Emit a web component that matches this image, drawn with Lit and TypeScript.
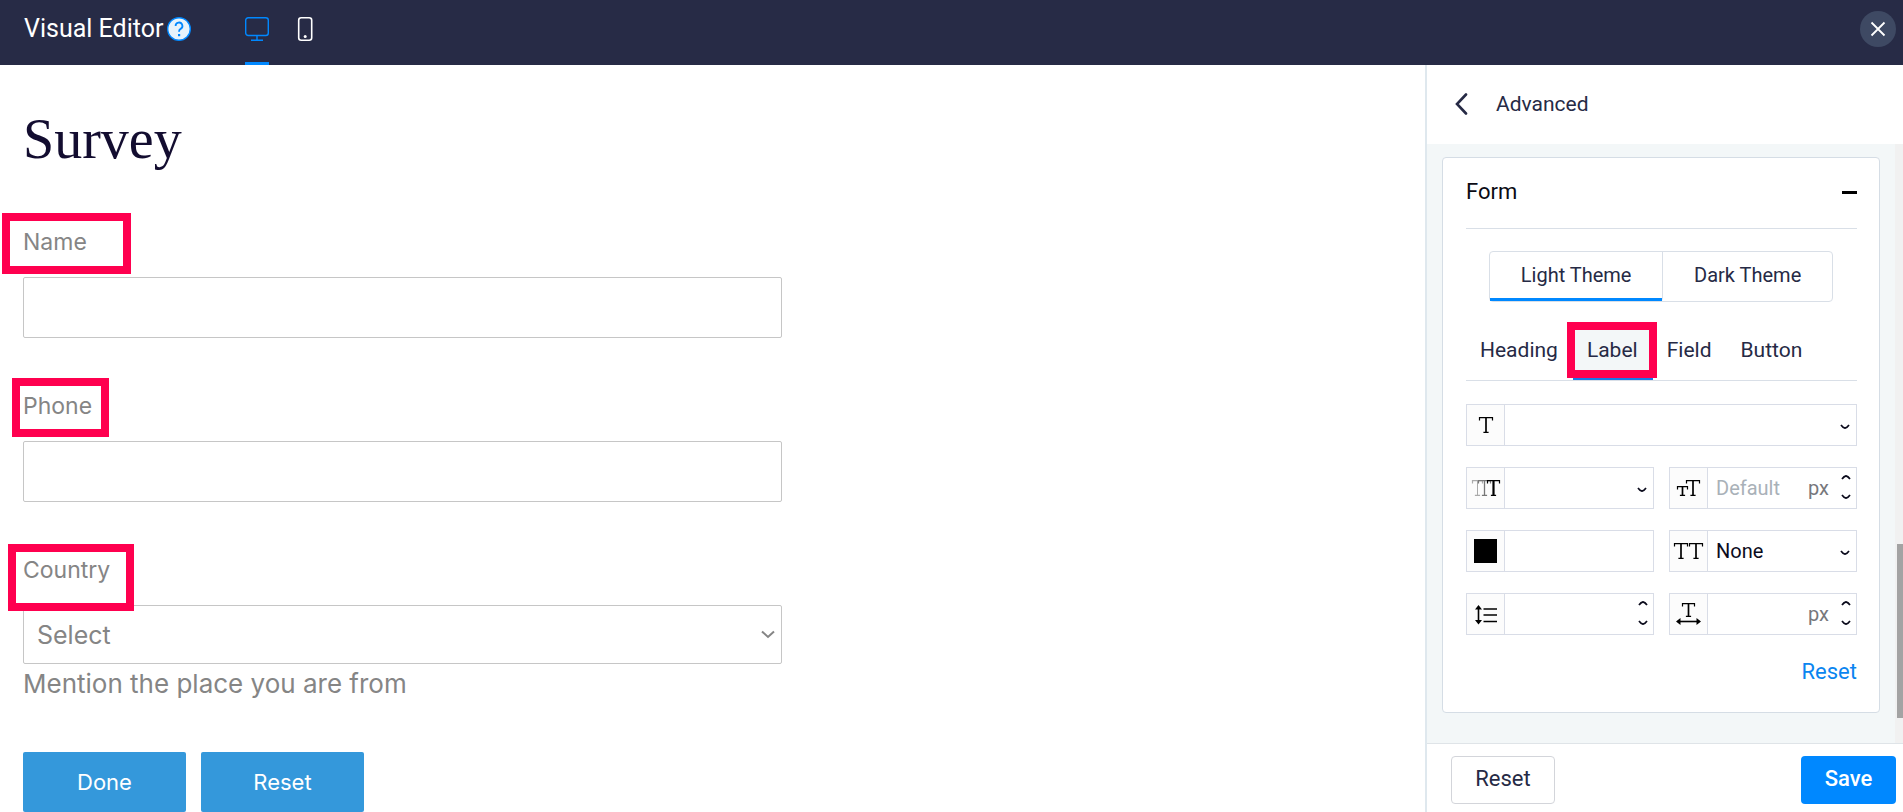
import { LitElement, html, css, svg, nothing } from "lit";
import { customElement, property, state } from "lit/decorators.js";
import { classMap } from "lit/directives/class-map.js";

const chevronDown = html`<svg class="chev" viewBox="0 0 10 6" width="10" height="6" aria-hidden="true">
  <path d="M1 1 Q3 3.8 5 4.2 Q7 3.8 9 1" fill="none" stroke="currentColor" stroke-width="1.7" /></svg>`;
const chevronUp = html`<svg class="chev" viewBox="0 0 10 6" width="10" height="6" aria-hidden="true">
  <path d="M1 5 Q3 2.2 5 1.8 Q7 2.2 9 5" fill="none" stroke="currentColor" stroke-width="1.7" /></svg>`;

/* Slab-serif type mark: bar with drop serifs, stem and foot. */
const typeMark = (x: number, y: number, w: number, h: number, color = "#000", stem = 1.7) => {
  const c = x + w / 2;
  return svg`<path d="M${x + 0.5} ${y + 3.6}V${y + 0.6}H${x + w - 0.5}V${y + 3.6}M${c - 2.6} ${y + h - 0.6}H${c + 2.6}"
      fill="none" stroke=${color} stroke-width="1.2" />
    <path d="M${c} ${y + 0.6}V${y + h - 0.6}" stroke=${color} stroke-width=${stem} />`;
};

const icons: Record<string, unknown> = {
  family: svg`${typeMark(12, 12, 14, 16)}`,
  weight: svg`${typeMark(5, 12, 11, 16, "#aaa", 1)}${typeMark(11, 12, 13, 16, "#777", 1.3)}${typeMark(20, 12, 13, 16, "#000", 2.2)}`,
  size: svg`${typeMark(7, 18, 11, 10)}${typeMark(16, 12, 14, 16)}`,
  transform: svg`${typeMark(4, 12, 14, 16)}${typeMark(19, 12, 14, 16)}`,
  leading: svg`<path d="M11.500 13.500V28M16.500 15H30M16.500 21H30M16.500 27.500H30" stroke="#000" stroke-width="1.6" />
    <path d="M11.500 11L15 15.500H8ZM11.500 30.500L15 26H8Z" />`,
  tracking: svg`${typeMark(12, 9, 13, 14)}
    <path d="M8 27.500H29" stroke="#000" stroke-width="1.6" />
    <path d="M6 27.500L10.500 24V31ZM31 27.500L26.500 24V31Z" />`,
};

@customElement("style-control")
class StyleControl extends LitElement {
  @property() icon = "";
  @property() label = "";
  @property() kind: "select" | "number" | "color" = "select";
  @property() value = "";
  @property() hint = "";
  @property() unit = "";

  static styles = css`
    :host { display: block; }
    .box {
      display: flex; height: 42px; box-sizing: border-box;
      border: 1px solid #d9dde7; background: #fff;
      font: 20px/24px Roboto, sans-serif; color: #0b0b1c;
    }
    .mark {
      flex: 0 0 38px; box-sizing: border-box; border-right: 1px solid #d9dde7;
      background: #fcfcfc; display: flex; align-items: center; justify-content: center;
    }
    .swatch { width: 23px; height: 24px; padding: 0; border: 0; background: none; appearance: none; }
    .swatch::-webkit-color-swatch-wrapper { padding: 0; }
    .swatch::-webkit-color-swatch { border: 0; }
    .entry {
      flex: 1; min-width: 0; width: 0; box-sizing: border-box; padding: 0 8px; margin: 0; border: 0; outline: 0;
      background: transparent; appearance: none; border-radius: 0; font: inherit; color: inherit;
    }
    .entry::placeholder { color: #a9b1b8; opacity: 1; }
    .unit { color: #77777c; align-self: center; padding-right: 11px; }
    .picker { flex: 1; display: grid; align-items: center; }
    .picker .entry { grid-area: 1 / 1; width: 100%; height: 100%; }
    .picker .chev { grid-area: 1 / 1; justify-self: end; margin-right: 6px; margin-top: 4px; pointer-events: none; }
    .steps { display: flex; flex-direction: column; justify-content: space-between; padding: 4px 0; margin-right: 4px; }
    .step { display: flex; align-items: center; justify-content: center; width: 12px; height: 10px; padding: 0; border: 0; background: none; color: inherit; }
    .step:last-child { height: 14px; }
  `;

  private step(by: number) {
    this.value = String((Number(this.value) || 0) + by);
  }

  render() {
    return html`<div class="box">
      <span class="mark">${this.kind === "color"
        ? html`<input class="swatch" type="color" value="#000000" aria-label=${this.label} />`
        : html`<svg viewBox="0 0 37 40" width="37" height="40" aria-hidden="true">${icons[this.icon]}</svg>`}</span>
      ${this.kind === "select"
        ? html`<div class="picker"><select class="entry" aria-label=${this.label}><option>${this.value}</option></select>${chevronDown}</div>`
        : html`<input class="entry" type="text" aria-label=${this.label} .value=${this.value} placeholder=${this.hint || nothing} />`}
      ${this.unit ? html`<span class="unit">${this.unit}</span>` : nothing}
      ${this.kind === "number"
        ? html`<div class="steps">
            <button class="step" aria-label="Increase" @click=${() => this.step(1)}>${chevronUp}</button>
            <button class="step" aria-label="Decrease" @click=${() => this.step(-1)}>${chevronDown}</button>
          </div>`
        : nothing}
    </div>`;
  }
}

@customElement("survey-form")
class SurveyForm extends LitElement {
  static styles = css`
    :host { display: block; font: 23px/30px Inter, sans-serif; color: #858585; padding: 42px 23px 0; }
    .title { font: 400 56px/64px "Liberation Serif", serif; color: #130d30; margin: 0 0 56px; }
    .row { max-width: 759px; margin-bottom: 53px; }
    .name { position: relative; display: block; width: max-content; margin-bottom: 20px; }
    .entry {
      display: block; width: 100%; height: 61px; box-sizing: border-box; margin: 0; padding: 0 13px;
      border: 1px solid #c6c6c6; border-radius: 2px; background: #fff; outline: 0; appearance: none;
      font: 25px/30px Inter, sans-serif; color: #858585;
    }
    .picker { display: grid; align-items: center; }
    .picker .entry { grid-area: 1 / 1; height: 59px; }
    .arrow { grid-area: 1 / 1; justify-self: end; margin-right: 7px; pointer-events: none; }
    .hint { font-size: 26px; line-height: 30px; margin: 5px 0 0; }
    .actions { display: flex; gap: 15px; }
    .action {
      height: 60px; width: 163px; border: 0; border-radius: 2px; background: #3498db; color: #fff;
      font: 400 22px/28px Inter, sans-serif; padding: 0 0 1px;
    }
    .ring { position: absolute; border: 8px solid #ff004f; pointer-events: none; }
    .ring.a { left: -21px; top: -14px; width: 113px; height: 45px; }
    .ring.b { left: -11px; top: -13px; width: 81px; height: 43px; }
    .ring.c { left: -15px; top: -11px; width: 110px; height: 51px; }
  `;

  render() {
    return html`
      <h1 class="title">Survey</h1>
      <div class="row">
        <label class="name" for="name">Name<span class="ring a"></span></label>
        <input class="entry" id="name" type="text" />
      </div>
      <div class="row">
        <label class="name" for="phone">Phone<span class="ring b"></span></label>
        <input class="entry" id="phone" type="tel" />
      </div>
      <div class="row">
        <label class="name" for="country">Country<span class="ring c"></span></label>
        <div class="picker">
          <select class="entry" id="country"><option>Select</option></select>
          <svg class="arrow" viewBox="0 0 14 9" width="14" height="9" aria-hidden="true">
            <path d="M1 1.500L7 7L13 1.500" fill="none" stroke="#858585" stroke-width="2" /></svg>
        </div>
        <p class="hint">Mention the place you are from</p>
      </div>
      <div class="actions">
        <button class="action">Done</button>
        <button class="action">Reset</button>
      </div>`;
  }
}

@customElement("style-panel")
class StylePanel extends LitElement {
  @state() theme = "Light Theme";
  @state() tab = "Label";

  static styles = css`
    :host {
      display: flex; flex-direction: column; box-sizing: border-box; min-height: 0;
      border-left: 2px solid #dfe8ee; background: #fff; color: #262a45;
      font: 20px/24px Roboto, sans-serif;
    }
    button { font: inherit; color: inherit; margin: 0; padding: 0; border: 0; background: none; }
    .head { flex: 0 0 79px; box-sizing: border-box; display: flex; align-items: center; gap: 28px; padding: 0 27px 1px; }
    .head h2 { font: 400 21px/24px Roboto, sans-serif; margin: 0; }
    .back { display: flex; }
    .scroll { flex: 1; min-height: 0; display: flex; background: #f3f7f8; }
    .body { flex: 1; min-width: 0; overflow: hidden; padding: 13px 15px 0; }
    .track { flex: 0 0 8px; background: #f1f1f1; padding-left: 2px; box-sizing: border-box; display: grid; grid-template-rows: 400fr 174fr 25fr; }
    .thumb { grid-row: 2; background: #a3a3a3; }
    .card { border: 1px solid #d5dde5; border-radius: 4px; background: #fff; padding: 0 22px 26px 23px; }
    .fold { display: flex; align-items: center; justify-content: space-between; width: 100%; height: 71px; border-bottom: 1px solid #d9dfe7; color: #0b0b14; font-size: 22px; padding-bottom: 2px; }
    .minus { width: 15px; height: 3px; background: #000; }
    .themes { display: flex; margin: 22px 24px 0 23px; border: 1px solid #d9dfe7; border-radius: 4px; height: 51px; box-sizing: border-box; }
    .theme { flex: 1 1 auto; padding: 0 28px 1px; border-bottom: 3px solid transparent; }
    .theme + .theme { border-left: 1px solid #d9dfe7; }
    .theme.on { border-bottom-color: #0088ff; }
    .tabs { display: flex; margin-top: 20px; height: 59px; box-sizing: border-box; border-bottom: 1px solid #d9dfe7; font-size: 21px; }
    .tab { position: relative; padding: 0 15px 0 14px; border-bottom: 3px solid transparent; }
    .tab.on { background: #f3f7f8; border-bottom-color: #1878e8; }
    .ring { position: absolute; left: -6px; right: -4px; top: 0; bottom: -1px; border: 8px solid #ff004f; pointer-events: none; }
    .grid { display: grid; grid-template-columns: 1fr 1fr; gap: 21px 15px; margin-top: 23px; }
    .wide { grid-column: 1 / -1; }
    .more { display: flex; justify-content: flex-end; margin-top: 23px; }
    .more a { color: #0a85f0; text-decoration: none; font-size: 22px; line-height: 28px; }
    .foot { flex: 0 0 69px; box-sizing: border-box; border-top: 1px solid #dfe4e8; display: flex; align-items: flex-start; justify-content: space-between; padding: 12px 7px 0 24px; }
    .foot button { height: 48px; border-radius: 4px; font-size: 22px; padding-bottom: 3px; }
    .plain { width: 104px; border: 1px solid #d3d5da; }
    .foot .save { width: 95px; background: #0088ff; color: #fff; font-weight: 500; }
  `;

  render() {
    return html`
      <div class="head">
        <button class="back" aria-label="Back">
          <svg viewBox="0 0 14 22" width="14" height="22" aria-hidden="true">
            <path d="M12 1.500L3 11L12 20.500" fill="none" stroke="#262a45" stroke-width="2.600" stroke-linecap="round" /></svg>
        </button>
        <h2>Advanced</h2>
      </div>
      <div class="scroll">
        <div class="body">
          <section class="card">
            <button class="fold" aria-expanded="true"><span>Form</span><i class="minus"></i></button>
            <div class="themes">
              ${["Light Theme", "Dark Theme"].map((t) => html`<button
                class=${classMap({ theme: true, on: t === this.theme })}
                @click=${() => (this.theme = t)}>${t}</button>`)}
            </div>
            <div class="tabs" role="tablist">
              ${["Heading", "Label", "Field", "Button"].map((t) => html`<button role="tab"
                class=${classMap({ tab: true, on: t === this.tab })}
                @click=${() => (this.tab = t)}>${t}${t === "Label" ? html`<span class="ring"></span>` : nothing}</button>`)}
            </div>
            <div class="grid">
              <style-control class="wide" icon="family" label="Font family"></style-control>
              <style-control icon="weight" label="Font weight"></style-control>
              <style-control icon="size" label="Font size" kind="number" hint="Default" unit="px"></style-control>
              <style-control label="Color" kind="color"></style-control>
              <style-control icon="transform" label="Text transform" value="None"></style-control>
              <style-control icon="leading" label="Line height" kind="number"></style-control>
              <style-control icon="tracking" label="Letter spacing" kind="number" unit="px"></style-control>
            </div>
            <div class="more"><a href="#reset">Reset</a></div>
          </section>
        </div>
        <div class="track"><div class="thumb"></div></div>
      </div>
      <div class="foot">
        <button class="plain">Reset</button>
        <button class="save">Save</button>
      </div>`;
  }
}

@customElement("app-root")
class AppRoot extends LitElement {
  static styles = css`
    :host { display: flex; flex-direction: column; height: 100vh; overflow: hidden; background: #fff; }
    .bar { flex: 0 0 65px; display: flex; align-items: flex-start; background: #272b46; color: #fff; padding: 0 7px 0 24px; }
    .brand { font: 400 25px/28px Roboto, sans-serif; margin: 15px 4px 0 0; }
    button { margin: 0; padding: 0; border: 0; background: none; }
    .help { display: flex; margin: 17px 54px 0 0; }
    .device { display: flex; align-items: flex-start; justify-content: center; height: 65px; width: 24px; box-sizing: border-box; padding-top: 17px; border-bottom: 3px solid transparent; margin-right: 24px; }
    .device.on { border-bottom-color: #0088ff; }
    .close { margin: 11px 0 0 auto; width: 36px; height: 36px; border-radius: 50%; background: #3e4963; display: flex; align-items: center; justify-content: center; }
    .work { flex: 1; min-height: 0; display: flex; }
    .canvas { flex: 1; min-width: 0; overflow: hidden; }
    .side { flex: 0 0 478px; }
  `;

  render() {
    return html`
      <header class="bar">
        <h1 class="brand">Visual Editor</h1>
        <button class="help" aria-label="Help">
          <svg viewBox="0 0 24 24" width="24" height="24" aria-hidden="true">
            <circle cx="12" cy="12" r="11.300" fill="#e6f3fb" stroke="#0088ff" stroke-width="1.400" />
            <path d="M8.600 9A3.400 3.400 0 1 1 13.600 11.900C12.500 12.500 12 13 12 14.800" fill="none" stroke="#0088ff" stroke-width="1.800" />
            <rect x="11" y="17" width="2.200" height="2.200" fill="#0088ff" />
          </svg>
        </button>
        <button class="device on" aria-label="Desktop">
          <svg viewBox="0 0 24 24" width="24" height="24" aria-hidden="true" fill="none" stroke="#0088ff" stroke-width="1.400">
            <rect x=".7" y=".7" width="22.600" height="17.800" rx="2.500" />
            <path d="M12 18.500V23.200M6 23.300H18" />
          </svg>
        </button>
        <button class="device" aria-label="Mobile">
          <svg viewBox="0 0 16 24" width="16" height="24" aria-hidden="true">
            <rect x="1.700" y=".8" width="13" height="22.400" rx="2.500" fill="none" stroke="#fff" stroke-width="1.600" />
            <circle cx="8.200" cy="19.500" r="1.500" fill="#fff" />
          </svg>
        </button>
        <button class="close" aria-label="Close">
          <svg viewBox="0 0 16 16" width="16" height="16" aria-hidden="true">
            <path d="M1.500 1.500L14.500 14.500M14.500 1.500L1.500 14.500" stroke="#fff" stroke-width="1.800" /></svg>
        </button>
      </header>
      <div class="work">
        <main class="canvas"><survey-form></survey-form></main>
        <style-panel class="side"></style-panel>
      </div>`;
  }
}
